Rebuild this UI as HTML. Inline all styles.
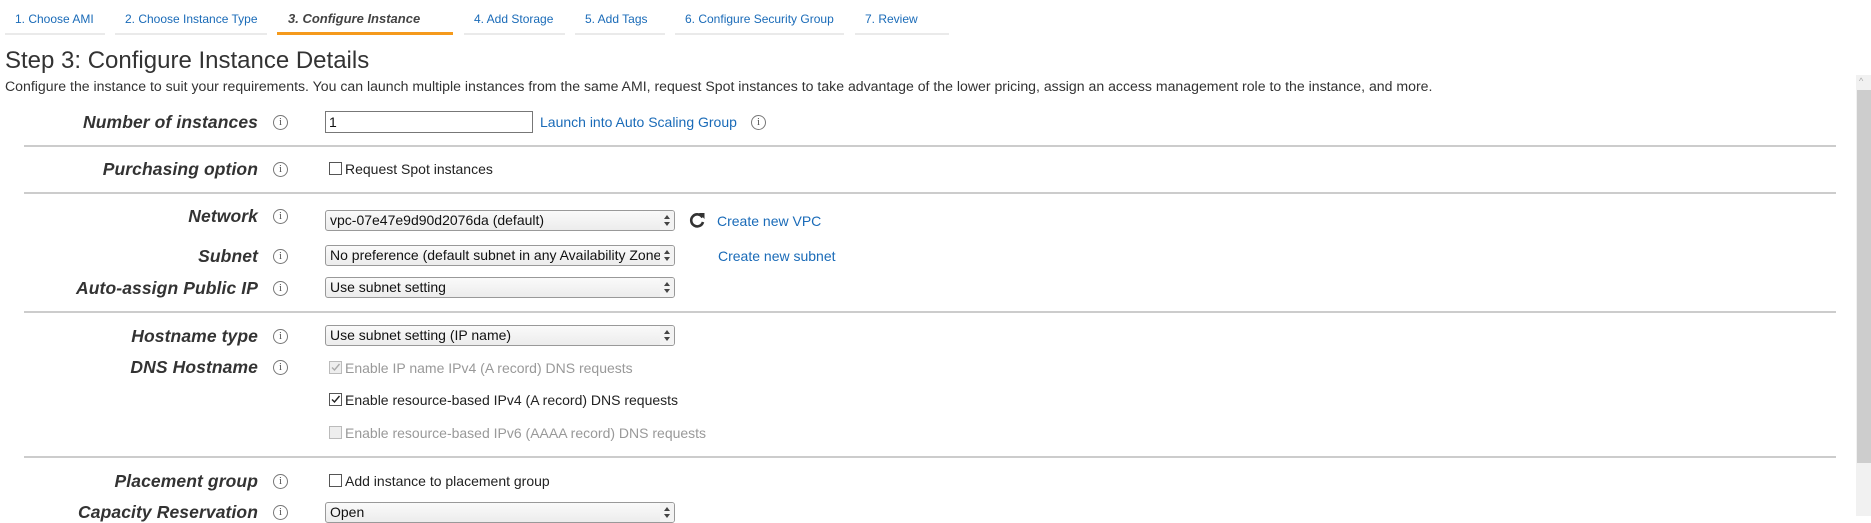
<!DOCTYPE html>
<html><head><style>
*{margin:0;padding:0;box-sizing:border-box}
body{width:1871px;height:516px;overflow:hidden;background:#fff;font-family:"Liberation Sans",Arial,sans-serif;color:#333;position:relative}
.a{position:absolute;white-space:nowrap}
.tab{position:absolute;top:33px;height:2px;background:#eaeaea}
.tt{position:absolute;top:12px;font-size:12px;color:#1a6bb8}
.lbl{position:absolute;font-size:17.5px;font-weight:bold;font-style:italic;color:#333;right:1613px;white-space:nowrap;line-height:20px;letter-spacing:0.1px}
.info{position:absolute;left:273px;width:15px;height:15px;border:1px solid #777;border-radius:50%;font-size:11px;color:#555;text-align:center;line-height:13px;font-family:"Liberation Serif",serif}
.sep{position:absolute;left:24px;width:1812px;height:2px;background:#ccc}
.sel{position:absolute;left:325px;width:350px;height:21px;border:1px solid #999;border-radius:3px;background:linear-gradient(#fafafa,#ececec);font-size:14px;line-height:19px;padding-left:4px;overflow:hidden;white-space:nowrap;color:#111}
.sel:after{content:"";position:absolute;right:0;top:0;width:14px;height:19px;background:#f3f3f3}
.arr{position:absolute;right:3px;top:3px;z-index:2;width:8px;height:13px}
.link{color:#1a6bb8;font-size:14px}
.cb{position:absolute;left:329px;width:13px;height:13px;border:1px solid #555;background:#fff}
.txt{font-size:14px;color:#222}
</style></head><body>
<div class="tab" style="left:5px;width:100px"></div><div class="tt" style="left:15px">1. Choose AMI</div>
<div class="tab" style="left:115px;width:152px"></div><div class="tt" style="left:125px">2. Choose Instance Type</div>
<div class="tab" style="left:277px;width:176px;background:#f59a1c;height:3px;top:32px"></div><div class="tt" style="left:288px;font-weight:bold;font-style:italic;color:#444;font-size:13px;top:11px">3. Configure Instance</div>
<div class="tab" style="left:464px;width:101px"></div><div class="tt" style="left:474px">4. Add Storage</div>
<div class="tab" style="left:575px;width:90px"></div><div class="tt" style="left:585px">5. Add Tags</div>
<div class="tab" style="left:675px;width:169px"></div><div class="tt" style="left:685px">6. Configure Security Group</div>
<div class="tab" style="left:855px;width:94px"></div><div class="tt" style="left:865px">7. Review</div>

<div class="a" style="left:5px;top:47px;font-size:24px;color:#333">Step 3: Configure Instance Details</div>
<div class="a" style="left:5px;top:78px;font-size:14.1px;color:#333">Configure the instance to suit your requirements. You can launch multiple instances from the same AMI, request Spot instances to take advantage of the lower pricing, assign an access management role to the instance, and more.</div>

<div style="position:absolute;left:1856px;top:75px;width:15px;height:441px;background:#f1f1f1"></div>
<div style="position:absolute;left:1857px;top:90px;width:14px;height:373px;background:#cdcdcd"></div>
<div class="a" style="left:1859px;top:76px;font-size:9px;color:#aaa">&#94;</div>

<div class="lbl" style="top:112px">Number of instances</div><div class="info" style="top:115px">i</div>
<div style="position:absolute;left:325px;top:111px;width:208px;height:22px;border:1px solid #777;font-size:14px;line-height:20px;padding-left:3px;color:#111">1</div>
<div class="a link" style="left:540px;top:114px">Launch into Auto Scaling Group</div><div class="info" style="left:751px;top:115px">i</div>
<div class="sep" style="top:145px"></div>

<div class="lbl" style="top:159px">Purchasing option</div><div class="info" style="top:162px">i</div>
<div class="cb" style="top:162px"></div><div class="a txt" style="left:345px;top:161px">Request Spot instances</div>
<div class="sep" style="top:192px"></div>

<div class="lbl" style="top:206px">Network</div><div class="info" style="top:209px">i</div>
<div class="sel" style="top:210px">vpc-07e47e9d90d2076da (default)<svg class="arr" viewBox="0 0 8 13"><path d="M1 5 L4 1 L7 5Z M1 8 L4 12 L7 8Z" fill="#444"/></svg></div>
<svg style="position:absolute;left:688px;top:211px" width="18" height="18" viewBox="0 0 18 18"><path d="M14.5 6.5A6 6 0 1 0 15 11" fill="none" stroke="#333" stroke-width="2.6"/><path d="M11 2 L16.5 2 L16.5 8Z" fill="#333"/></svg>
<div class="a link" style="left:717px;top:213px">Create new VPC</div>

<div class="lbl" style="top:246px">Subnet</div><div class="info" style="top:249px">i</div>
<div class="sel" style="top:245px">No preference (default subnet in any Availability Zone)<svg class="arr" viewBox="0 0 8 13"><path d="M1 5 L4 1 L7 5Z M1 8 L4 12 L7 8Z" fill="#444"/></svg></div>
<div class="a link" style="left:718px;top:248px">Create new subnet</div>

<div class="lbl" style="top:278px">Auto-assign Public IP</div><div class="info" style="top:281px">i</div>
<div class="sel" style="top:277px">Use subnet setting<svg class="arr" viewBox="0 0 8 13"><path d="M1 5 L4 1 L7 5Z M1 8 L4 12 L7 8Z" fill="#444"/></svg></div>
<div class="sep" style="top:311px"></div>

<div class="lbl" style="top:326px">Hostname type</div><div class="info" style="top:329px">i</div>
<div class="sel" style="top:325px">Use subnet setting (IP name)<svg class="arr" viewBox="0 0 8 13"><path d="M1 5 L4 1 L7 5Z M1 8 L4 12 L7 8Z" fill="#444"/></svg></div>

<div class="lbl" style="top:357px">DNS Hostname</div><div class="info" style="top:360px">i</div>
<div class="cb" style="top:361px;border-color:#bbb;background:#eee"><svg width="11" height="11" style="position:absolute;left:0;top:0"><path d="M2 5.5 L4.5 8 L9.5 2" fill="none" stroke="#aaa" stroke-width="1.4"/></svg></div>
<div class="a txt" style="left:345px;top:360px;color:#999">Enable IP name IPv4 (A record) DNS requests</div>
<div class="cb" style="top:393px"><svg width="11" height="11" style="position:absolute;left:0;top:0"><path d="M2 5.5 L4.5 8 L9.5 2" fill="none" stroke="#222" stroke-width="1.4"/></svg></div>
<div class="a txt" style="left:345px;top:392px">Enable resource-based IPv4 (A record) DNS requests</div>
<div class="cb" style="top:426px;border-color:#bbb;background:#eee"></div>
<div class="a txt" style="left:345px;top:425px;color:#999">Enable resource-based IPv6 (AAAA record) DNS requests</div>
<div class="sep" style="top:456px"></div>

<div class="lbl" style="top:471px">Placement group</div><div class="info" style="top:474px">i</div>
<div class="cb" style="top:474px"></div><div class="a txt" style="left:345px;top:473px">Add instance to placement group</div>

<div class="lbl" style="top:502px">Capacity Reservation</div><div class="info" style="top:505px">i</div>
<div class="sel" style="top:502px">Open<svg class="arr" viewBox="0 0 8 13"><path d="M1 5 L4 1 L7 5Z M1 8 L4 12 L7 8Z" fill="#444"/></svg></div>
</body></html>
